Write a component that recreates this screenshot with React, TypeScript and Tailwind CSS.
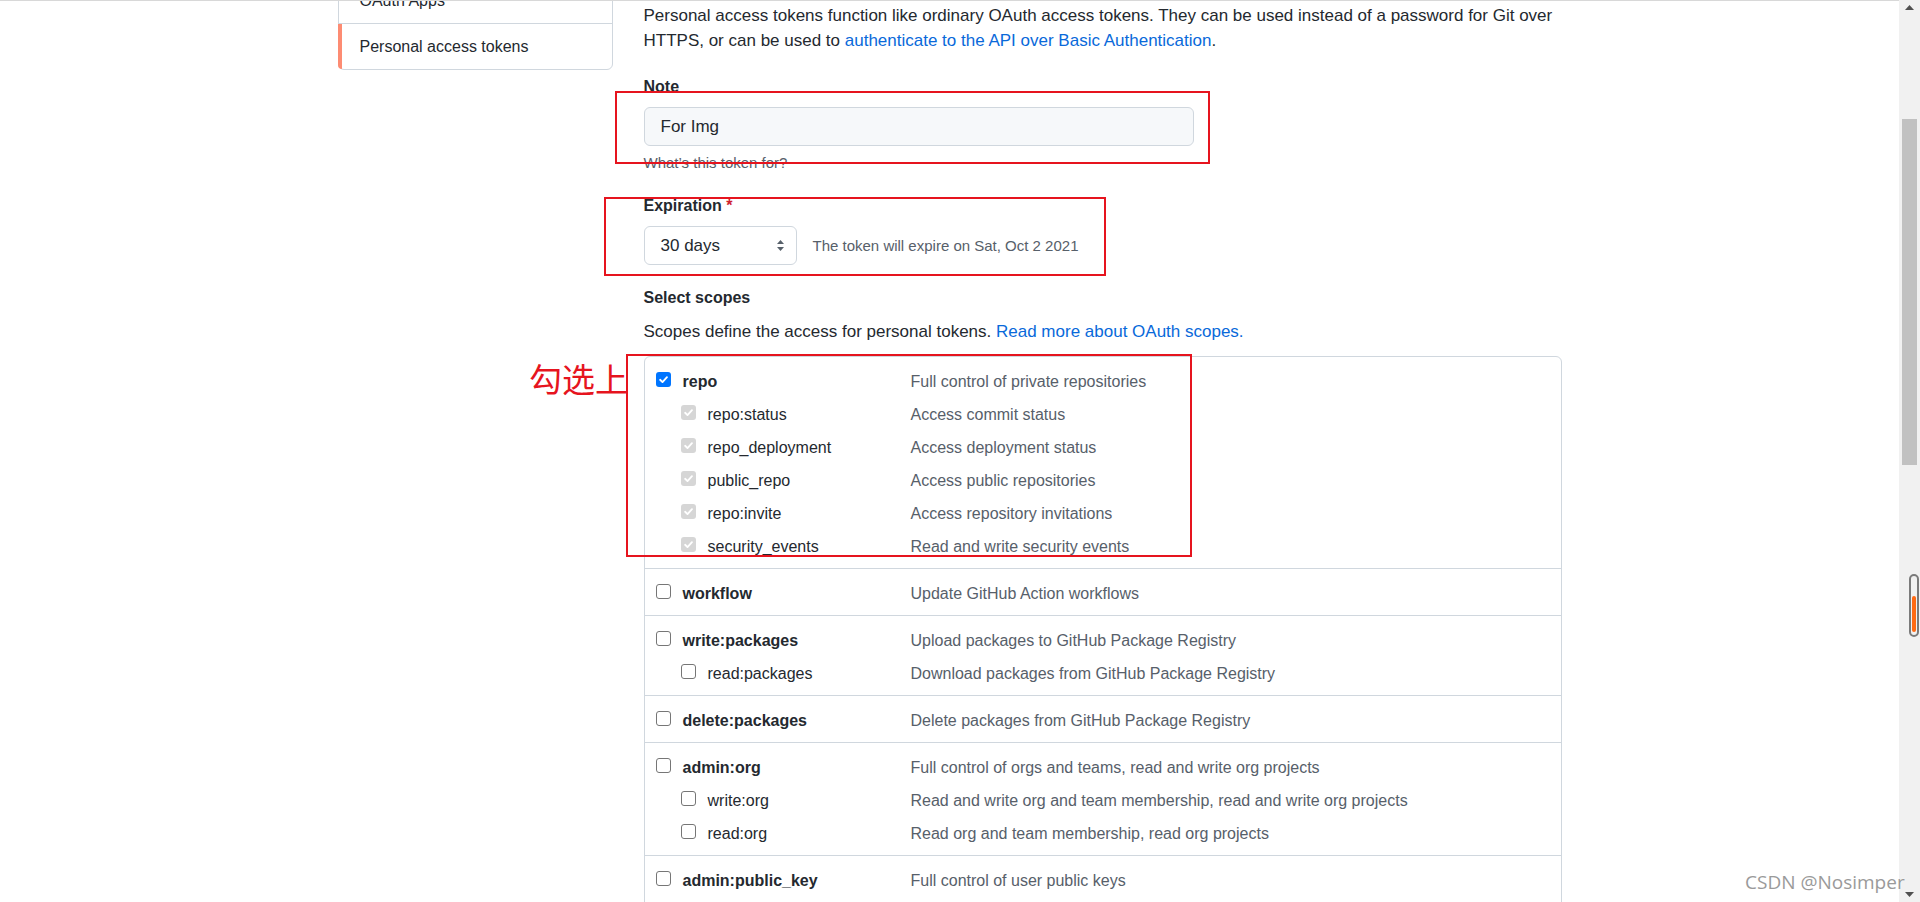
import React from "react";

type Check = "on" | "locked" | "off";
type Row = { name: string; desc: string; sub?: boolean; state: Check };

const groups: Row[][] = [
  [
    { name: "repo", desc: "Full control of private repositories", state: "on" },
    { name: "repo:status", desc: "Access commit status", sub: true, state: "locked" },
    { name: "repo_deployment", desc: "Access deployment status", sub: true, state: "locked" },
    { name: "public_repo", desc: "Access public repositories", sub: true, state: "locked" },
    { name: "repo:invite", desc: "Access repository invitations", sub: true, state: "locked" },
    { name: "security_events", desc: "Read and write security events", sub: true, state: "locked" },
  ],
  [{ name: "workflow", desc: "Update GitHub Action workflows", state: "off" }],
  [
    { name: "write:packages", desc: "Upload packages to GitHub Package Registry", state: "off" },
    { name: "read:packages", desc: "Download packages from GitHub Package Registry", sub: true, state: "off" },
  ],
  [{ name: "delete:packages", desc: "Delete packages from GitHub Package Registry", state: "off" }],
  [
    { name: "admin:org", desc: "Full control of orgs and teams, read and write org projects", state: "off" },
    { name: "write:org", desc: "Read and write org and team membership, read and write org projects", sub: true, state: "off" },
    { name: "read:org", desc: "Read org and team membership, read org projects", sub: true, state: "off" },
  ],
  [
    { name: "admin:public_key", desc: "Full control of user public keys", state: "off" },
    { name: "write:public_key", desc: "Write user public keys", sub: true, state: "off" },
    { name: "read:public_key", desc: "Read user public keys", sub: true, state: "off" },
  ],
];

function Box({ state }: { state: Check }) {
  if (state === "off") {
    return <span className="w-[15px] h-[15px] shrink-0 mb-[5px] rounded-[3px] border border-[#767676] bg-white" />;
  }
  return (
    <span
      className={`w-[15px] h-[15px] shrink-0 mb-[5px] rounded-[3px] flex items-center justify-center ${
        state === "on" ? "bg-[#0075ff]" : "bg-[#d6d6d6]"
      }`}
    >
      <svg width="11" height="11" viewBox="0 0 12 12">
        <path d="M2.3 6.3l2.6 2.5 4.9-5.4" fill="none" stroke="white" strokeWidth="2" strokeLinecap="round" strokeLinejoin="round" />
      </svg>
    </span>
  );
}

export default function App() {
  return (
    <div className="w-[1920px] h-[902px] overflow-hidden flex bg-white relative text-[#24292f] font-['Liberation_Sans',Arial,sans-serif]">
      {/* page */}
      <div className="w-[1899px] h-full border-t border-[#d8d8d8] overflow-hidden">
        <div className="w-[1224px] mx-auto flex items-start gap-[31px]">
          {/* settings sidebar */}
          <nav className="w-[275px] shrink-0 -mt-[70px] border border-[#d0d7de] rounded-md text-[16px]">
            <div className="h-[46px] flex items-center pl-[21px] border-b border-[#d0d7de]">GitHub Apps</div>
            <div className="h-[46px] flex items-center pl-[21px] border-b border-[#d0d7de]">OAuth Apps</div>
            <div className="relative h-[45px] flex items-center pl-[21px]">
              <span className="absolute -left-px top-0 bottom-0 w-[4px] bg-[#fd8c73] rounded-bl-md" />
              Personal access tokens
            </div>
          </nav>

          {/* main form */}
          <main className="w-[918px] shrink-0 pt-[2px] text-[16px] leading-[25px]">
            <p className="whitespace-nowrap text-[17px]">
              Personal access tokens function like ordinary OAuth access tokens. They can be used instead of a password for Git over
              <br />
              HTTPS, or can be used to <span className="text-[#0969da]">authenticate to the API over Basic Authentication</span>.
            </p>

            <div className="mt-[21px] font-semibold">Note</div>
            <div className="mt-[8px] w-[550px] h-[39px] rounded-md border border-[#d0d7de] bg-[#f6f8fa] flex items-center pl-[16px] text-[17px]">
              For Img
            </div>
            <div className="mt-[7px] text-[15px] leading-[20px] text-[#57606a]">What’s this token for?</div>

            <div className="mt-[20px] font-semibold">
              Expiration <span className="text-[#cf222e]">*</span>
            </div>
            <div className="mt-[8px] flex items-center gap-[16px]">
              <div className="w-[153px] h-[39px] rounded-md border border-[#d0d7de] bg-white flex items-center justify-between pl-[16px] pr-[11px] text-[17px]">
                <span>30 days</span>
                <svg width="9" height="13" viewBox="0 0 9 13">
                  <path d="M4.5 1L8 5H1z M4.5 12L1 8h7z" fill="#57606a" />
                </svg>
              </div>
              <span className="text-[15px] text-[#57606a]">The token will expire on Sat, Oct 2 2021</span>
            </div>

            <div className="mt-[20px] font-semibold">Select scopes</div>
            <p className="mt-[9px] text-[17px]">
              Scopes define the access for personal tokens.{" "}
              <span className="text-[#0969da]">Read more about OAuth scopes.</span>
            </p>

            {/* scopes table */}
            <div className="mt-[12px] border border-[#d0d7de] rounded-md">
              {groups.map((g, gi) => (
                <div key={gi} className={`pt-[8px] pb-[5px] ${gi > 0 ? "border-t border-[#d0d7de]" : ""}`}>
                  {g.map((r) => (
                    <div key={r.name} className="flex items-center h-[33px]">
                      <div className={`w-[266px] shrink-0 flex items-center gap-[12px] ${r.sub ? "pl-[36px]" : "pl-[11px]"}`}>
                        <Box state={r.state} />
                        <span className={r.sub ? "" : "font-semibold"}>{r.name}</span>
                      </div>
                      <span className="text-[#57606a]">{r.desc}</span>
                    </div>
                  ))}
                </div>
              ))}
            </div>
          </main>
        </div>
      </div>

      {/* browser scrollbar */}
      <div className="w-[21px] h-full bg-[#f1f1f1] flex flex-col items-center">
        <svg className="mt-[5px]" width="9" height="5" viewBox="0 0 9 5">
          <path d="M4.5 0L9 5H0z" fill="#505050" />
        </svg>
        <div className="mt-[109px] w-[15px] h-[346px] bg-[#c1c1c1]" />
        <div className="flex-1" />
        <svg className="mb-[5px]" width="9" height="5" viewBox="0 0 9 5">
          <path d="M0 0h9L4.5 5z" fill="#505050" />
        </svg>
      </div>

      {/* page-side reading indicator */}
      <div className="absolute left-[1909px] top-[574px] w-[10px] h-[63px] border-2 border-[#7a7a7a] rounded-full flex flex-col justify-end items-center pb-[3px]">
        <div className="w-[4px] h-[36px] rounded-full bg-[#ff6a13]" />
      </div>

      {/* red annotations */}
      <div className="absolute left-[615px] top-[91px] w-[595px] h-[73px] border-2 border-[#e6141e]" />
      <div className="absolute left-[604px] top-[197px] w-[502px] h-[79px] border-2 border-[#e6141e]" />
      <div className="absolute left-[626px] top-[354px] w-[566px] h-[203px] border-2 border-[#e6141e]" />
      <div className="absolute left-[529px] top-[360px] text-[33px] leading-[36px] text-[#e6141e] font-['Noto_Sans_CJK_SC',sans-serif]">
        勾选上
      </div>

      {/* watermark */}
      <div className="absolute left-[1745px] top-[868px] text-[19px] text-[#9a9a9a] font-['Open_Sans',sans-serif] [text-shadow:0_0_2px_#fff]">
        CSDN @Nosimper
      </div>
    </div>
  );
}
